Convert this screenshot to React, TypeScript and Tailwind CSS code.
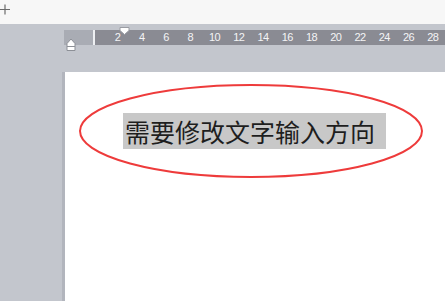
const ticks = [2, 4, 6, 8, 10, 12, 14, 16, 18, 20, 22, 24, 26, 28];

const App: React.FC = () => {
  return (
    <div className="flex flex-col w-[445px] h-[301px] overflow-hidden bg-[#c3c6cd] font-['Liberation_Sans',sans-serif]">
      <div className="h-[24px] bg-[#f7f7f7] flex items-start shrink-0">
        <svg width="12" height="14" viewBox="0 0 12 14" className="mt-[2px]">
          <path d="M0 7.5h10M5 2.5v10" stroke="#6b6b6b" strokeWidth="1.2" />
        </svg>
      </div>
      <div className="flex mt-[6px] ml-[64px] h-[15px] shrink-0 relative">
        <div className="w-[31px] bg-[#a9acb4]"></div>
        <div className="w-[2px] bg-[#eef0f3]"></div>
        <div className="flex-1 bg-[#8a8b93] flex items-center pl-[11px] text-[11px] text-[#f4f4f6] tracking-[-0.4px]">
          {ticks.map((t) => (
            <span key={t} className="w-[24.25px] shrink-0 text-center leading-none">
              {t}
            </span>
          ))}
        </div>
        <svg width="11" height="8" viewBox="0 0 11 8" className="absolute left-[55px] top-[-3px]">
          <path d="M1 0.5h9v3l-4.5 4l-4.5-4z" fill="#fff" stroke="#9a9ca3" />
        </svg>
        <svg width="10" height="13" viewBox="0 0 10 13" className="absolute left-[2px] top-[8px]">
          <path d="M1 5.5l4-4.5l4 4.5v7h-8z" fill="#fff" stroke="#8d9097" />
          <path d="M1 8.5h8" stroke="#8d9097" />
        </svg>
      </div>
      <div className="flex-1 mt-[27px] ml-[62px] flex">
        <div className="w-[3px] bg-[#b2b5bd]"></div>
        <div className="flex-1 bg-white relative pt-[41px] pl-[58px]">
          <span className="inline-block bg-[#c8c8c8] h-[36px] w-[263px] pl-[2px] leading-[36px] text-[25px] text-[#1e1e1e] font-['Noto_Sans_CJK_SC',sans-serif]">
            需要修改文字输入方向
          </span>
          <svg width="350" height="100" viewBox="0 0 350 100" className="absolute left-[12px] top-[12px] pointer-events-none">
            <ellipse cx="174" cy="47" rx="171" ry="46" fill="none" stroke="#ee3b3b" strokeWidth="2" />
          </svg>
        </div>
      </div>
    </div>
  );
};

export default App;
